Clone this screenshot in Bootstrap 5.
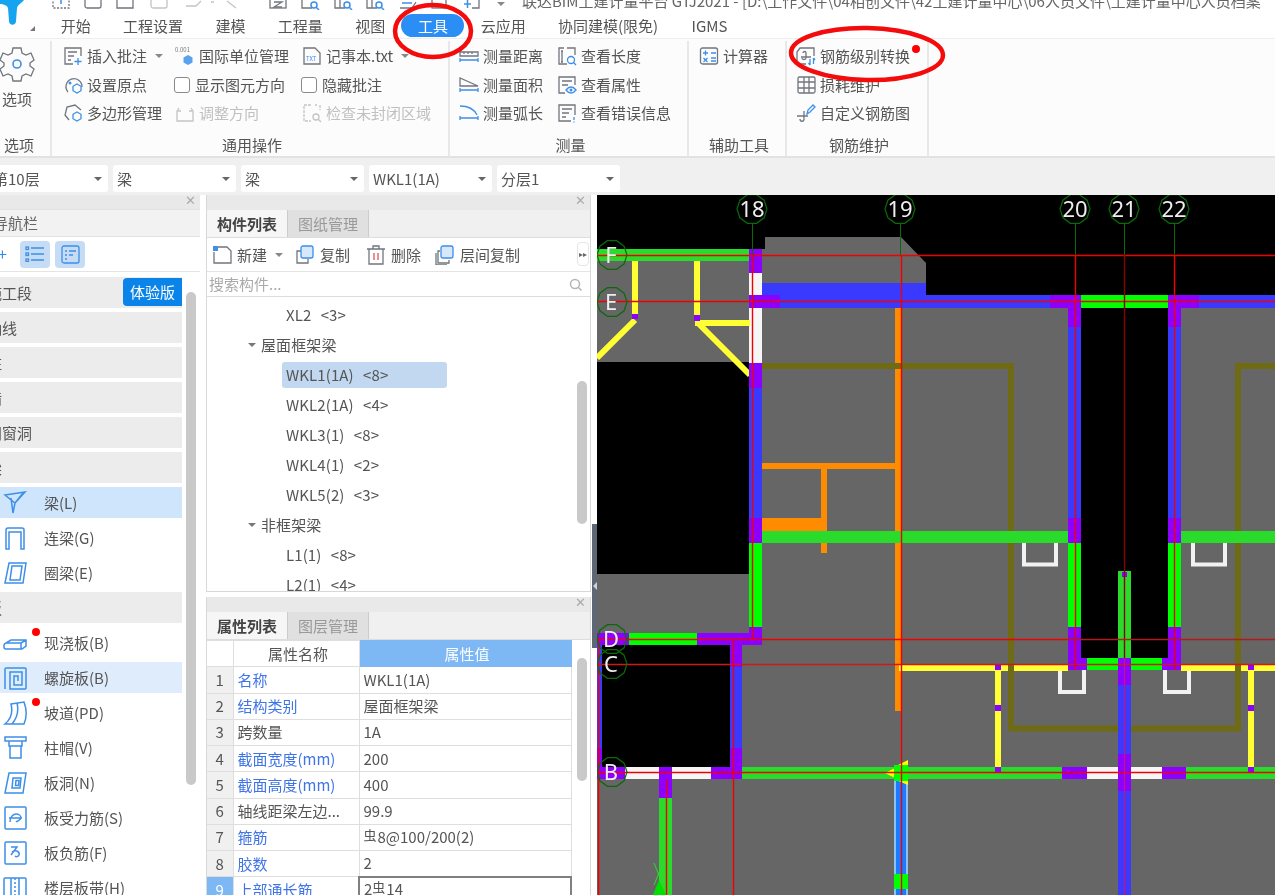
<!doctype html>
<html lang="zh-CN">

<head>
    <meta charset="UTF-8">
    <title>GTJ2021</title>
    <link href="https://cdn.jsdelivr.net/npm/bootstrap@5.3.3/dist/css/bootstrap.min.css" rel="stylesheet">
    <style>
        html, body { width: 1275px; height: 895px; overflow: hidden; background: #fff; }
        body {
            font-family: "Noto Sans CJK SC", "Noto Sans", sans-serif;
            font-size: 15px; line-height: 20px; color: #555;
            position: relative;
            filter: blur(0.35px);
        }
        svg { display: block; flex: none; }
        .ic { fill: none; stroke: #70767e; stroke-width: 1.3; }
        .ic .bl { stroke: #3d8fe8; }
        .ic .fb { fill: #3d8fe8; stroke: none; }
        .ic.off { stroke: #c4c4c4; }
        .ic.off .bl { stroke: #c4c4c4; }
        .ni { fill: none; stroke: #3d8fe8; stroke-width: 1.5; }

        /* top strip */
        .quick-strip { height: 14px; overflow: hidden; position: relative; }
        .logo-mark { position: absolute; left: 0; top: 0; }
        .title-text { position: absolute; left: 522px; top: -9px; white-space: nowrap; color: #666; }
        .qi { position: absolute; top: -10px; }
        .tab-row { height: 24px; padding-left: 44.500px; }
        .tab-item { padding: 0 16.2px; height: 23px; line-height: 23px; border-radius: 12px; color: #555; white-space: nowrap; }
        .tab-on { background: #2b8ef5; color: #fff; padding: 0 16.5px; }
        .tab-last { margin-left: 1px; }
        .logo-corner { position: absolute; left: 30px; top: 26px; width: 0; height: 0; border-left: 5px solid transparent; border-bottom: 5px solid #777; }

        /* ribbon */
        .ribbon { height: 118px; background: #fcfcfc; border-top: 1px solid #eee; }
        .rb-group { height: 115px; border-right: 2px solid #e8e8e8; margin-top: 2px; }
        .rb-body { height: 94px; padding-top: 1px; }
        .rb-label { height: 21px; line-height: 20px; text-align: center; color: #555; padding-left: 4px; }
        .g-opt .rb-label { padding-left: 0; padding-right: 0; text-align: left; margin-left: 4px; }
        .rb-col { flex: none; }
        .rb-item { height: 28.5px; white-space: nowrap; }
        .rb-item svg { margin-right: 4px; }
        .g-opt { width: 52px; }
        .g-gen { width: 398px; }
        .g-mea { width: 239px; }
        .g-aid { width: 98px; }
        .g-reb { width: 142px; }
        .c-a { width: 123px; padding-left: 11px; }
        .c-b { width: 127px; }
        .c-c { width: 148px; }
        .c-d { width: 107px; padding-left: 9px; }
        .c-e { width: 130px; }
        .c-f { padding-left: 10px; }
        .c-g { padding-left: 9px; }
        .opt-big { width: 36px; margin-left: -1px; margin-top: 3px; }
        .opt-big span { margin-top: 7px; }
        .dim-text { color: #c0c0c0; }
        .fake-check { width: 16px; height: 16px; border: 1px solid #8a8a8a; border-radius: 3px; background: #fff; margin-right: 5px; margin-left: -1px; }
        .tri-down { display: inline-block; width: 0; height: 0; border-left: 4px solid transparent; border-right: 4px solid transparent; border-top: 4px solid #888; }
        .red-dot { position: absolute; width: 8px; height: 8px; border-radius: 50%; background: #f00; }
        .dot-rb { left: 912px; top: 45px; }

        /* floor bar */
        .sel-bar { height: 39px; background: #f0f0f0; border-top: 2px solid #e2e2e2; padding-top: 7px; gap: 5px; padding-left: 0; margin-left: -13px; }
        .sel-box { width: 123px; height: 27px; background: #fff; border-radius: 3px; padding: 0 5px 0 4px; }
        .sel-first { width: 121px; padding-left: 0; }
        .sel-first span:first-child { margin-left: 6px; }
        .sel-box .tri-down { border-top-color: #666; margin-right: 1px; }

        /* panels */
        .work-row { height: 700px; }
        .nav-panel { width: 200px; position: relative; overflow: hidden; }
        .panel-head { height: 14px; background: #e9e9e9; position: relative; }
        .mid-col .panel-head { height: 15px; }
        .panel-x { position: absolute; right: 4px; top: -3px; font-size: 13px; line-height: 16px; color: #aaa; }
        .nav-title { height: 28px; background: #f2f2f2; border-top: 1px solid #e2e2e2; border-bottom: 1px solid #e2e2e2; line-height: 26px; padding-left: 0; color: #666; }
        .nav-clip { margin-left: -7px; }
        .nav-tools { height: 35px; border-bottom: 1px solid #e4e4e4; gap: 5px; padding-left: 20px; position: relative; }
        .plus-mark { position: absolute; left: -2px; top: 6px; color: #2b8ef5; font-size: 16px; }
        .nav-btn { width: 30px; height: 27px; background: #c5dcf4; border-radius: 4px; }
        .nav-list { width: 182px; gap: 4px; padding-top: 5px; }
        .nav-row { height: 31px; }
        .sec-row { background: #ececec; }
        .sec-row .lbl { margin-left: -13px; }
        .try-badge { width: 59px; height: 28px; line-height: 28px; background: #0a84e8; color: #fff; text-align: center; border-top-left-radius: 4px; border-bottom-left-radius: 4px; margin-left: auto; align-self: flex-start; margin-top: 1px; }
        .row-on { background: #cfe5fb; }
        .row-hl { background: #deecfc; }
        .nav-ico { width: 44px; padding-left: 3px; }
        .dot-a { left: 32px; top: 433px; }
        .dot-b { left: 32px; top: 503px; }
        .scroll-thumb { position: absolute; width: 10px; background: #c9c9c9; border-radius: 5px; }
        .sb-nav { left: 186px; top: 97px; height: 493px; }

        .mid-col { width: 385px; margin-left: 6px; }
        .mid-top { height: 397px; position: relative; border-left: 1px solid #d8d8d8; border-right: 1px solid #d8d8d8; border-bottom: 1px solid #d8d8d8; overflow: hidden; }
        .mid-btm { height: 298px; margin-top: 5px; position: relative; border-left: 1px solid #d8d8d8; border-right: 1px solid #d8d8d8; overflow: hidden; }
        .tab-bar { height: 28px; background: #f0f0f0; border-bottom: 1px solid #ddd; }
        .pane-tab { width: 81px; line-height: 28px; text-align: center; border-right: 1px solid #ccc; }
        .pane-on { font-weight: 700; color: #444; background: #f6f6f6; }
        .pane-off { background: #e0e0e0; color: #999; }
        .mid-tools { height: 34px; border-bottom: 1px solid #e4e4e4; position: relative; }
        .mt-item { white-space: nowrap; }
        .mt-item svg { margin-right: 5px; }
        .m1 { width: 88px; padding-left: 5px; }
        .m2 { width: 71px; }
        .m3 { width: 69px; }
        .more-btn { position: absolute; left: 370px; top: 4px; width: 12px; height: 24px; border: 1px solid #e6e6e6; border-radius: 4px; background: #fff; font-size: 8px; line-height: 22px; text-align: center; color: #666; }
        .search-row { height: 25px; border-bottom: 1px solid #ddd; padding: 0 8px 0 2px; color: #aaa; }
        .tree-wrap { padding-top: 3px; }
        .tree-row { height: 30px; white-space: nowrap; padding-left: 79px; }
        .tree-row span, .tree-on span { white-space: pre; word-spacing: 1.2px; letter-spacing: 0.1px; }
        .tree-group { padding-left: 41px; }
        .tree-group .tri-down { margin-right: 5px; border-top-color: #777; }
        .tree-on { width: 165px; height: 26px; margin: 2px 0 2px 75px; padding-left: 4px; background: #c1d8f0; border-radius: 3px; }
        .sb-tree { left: 370px; top: 186px; height: 143px; }
        .sb-prop { left: 370px; top: 61px; height: 123px; }

        .prop-table { width: 364px; table-layout: fixed; margin: 0; border-collapse: collapse; font-size: 15px; color: #555; }
        .prop-table td, .prop-table th { height: 26.25px; padding: 0; border: 1px solid #dedede; font-weight: 400; line-height: 20px; vertical-align: middle; white-space: nowrap; overflow: hidden; }
        .prop-table tr > *:first-child { border-left: 0; }
        .prop-table th { text-align: center; color: #555; }
        .cx { width: 26px; background: #f0f0f0; text-align: center; }
        .prop-table th.cx-blank { background: #fff; }
        .cn { width: 126px; padding-left: 4px !important; }
        .cv { width: 212px; padding-left: 4px !important; }
        .prop-table th.cv-head { background: #7db8f5; color: #fff; border-color: #7db8f5; }
        .blue-name { color: #3f74e6; }
        .rebar-sym { font-size: 13px; position: relative; top: -3px; margin-right: 1px; }
        .prop-table td.cx-on { background: #7db8f5; color: #fff; }
        .prop-table td.cell-edit { border: 2px solid #808080; }

        .split-bar { width: 6px; position: relative; }
        .split-dark { position: absolute; left: 1px; top: 329px; width: 5px; height: 124px; background: #5d6776; }
        .split-arrow { position: absolute; left: 2px; top: 387px; width: 0; height: 0; border-top: 4px solid transparent; border-bottom: 4px solid transparent; border-right: 4px solid #cfd3d8; }
        .cad-view { width: 678px; height: 700px; background: #666; }
        .cad-num { font-family: "Noto Sans", sans-serif; font-size: 22px; fill: #eee; text-anchor: middle; }
        .mark-layer { position: absolute; left: 0; top: 0; pointer-events: none; }
    </style>
</head>

<body>
    <div class="quick-strip">
        <svg class="qi" style="left:52px" width="18" height="20" viewBox="0 0 18 20"><rect class="ic" x="1" y="2" width="16" height="16" stroke-dasharray="2 1.5"/><path d="M9 10v4" stroke="#3d8fe8" stroke-width="1.5"/></svg>
        <svg class="qi" style="left:84px" width="18" height="20" viewBox="0 0 18 20"><rect class="ic" x="1" y="2" width="16" height="16" rx="2"/></svg>
        <svg class="qi" style="left:116px" width="18" height="20" viewBox="0 0 18 20"><path class="ic" d="M1 18V8l4-6h12v16z"/></svg>
        <svg class="qi" style="left:150px" width="18" height="20" viewBox="0 0 18 20"><rect class="ic off" x="1" y="2" width="16" height="16" rx="2"/></svg>
        <svg class="qi" style="left:185px" width="32" height="20" viewBox="0 0 32 20"><path class="ic off" d="M1 16h10l5-5M26 12h3"/></svg>
        <svg class="qi" style="left:226px" width="12" height="20" viewBox="0 0 12 20"><path class="ic off" d="M1 11l9 7"/></svg>
        <svg class="qi" style="left:268px" width="20" height="20" viewBox="0 0 20 20"><rect class="ic" x="2" y="2" width="16" height="16"/><path class="ic" d="M6 12h8l-8 5h8"/></svg>
        <svg class="qi" style="left:300px" width="20" height="20" viewBox="0 0 20 20"><path class="ic" d="M2 8v10h10"/><circle cx="14" cy="15" r="3" fill="none" stroke="#3d8fe8" stroke-width="1.5"/><path d="M16 17l3 3" stroke="#3d8fe8" stroke-width="1.5"/></svg>
        <svg class="qi" style="left:333px" width="20" height="20" viewBox="0 0 20 20"><path class="ic" d="M2 8v10h10M7 8v10"/><circle cx="14" cy="15" r="3" fill="none" stroke="#3d8fe8" stroke-width="1.5"/><path d="M16 17l3 3" stroke="#3d8fe8" stroke-width="1.5"/></svg>
        <svg class="qi" style="left:365px" width="20" height="20" viewBox="0 0 20 20"><path class="ic" d="M2 8v10h10M7 8v10"/><circle cx="14" cy="15" r="3" fill="none" stroke="#3d8fe8" stroke-width="1.5"/><path d="M16 17l3 3" stroke="#3d8fe8" stroke-width="1.5"/></svg>
        <svg class="qi" style="left:398px" width="20" height="20" viewBox="0 0 20 20"><path class="ic" d="M2 18h12l4-6"/><path d="M4 13h10" stroke="#3d8fe8" stroke-width="1.5"/></svg>
        <svg class="qi" style="left:430px" width="18" height="20" viewBox="0 0 18 20"><rect class="ic" x="2" y="4" width="14" height="14"/></svg>
        <svg class="qi" style="left:463px" width="18" height="20" viewBox="0 0 18 20"><path d="M1 14h7M4.5 10v8" stroke="#3d8fe8" stroke-width="1.5"/><path class="ic" d="M9 18h7V4"/></svg>
        <span class="tri-down qi" style="left:497px;top:2px"></span>
        <span class="title-text">联达BIM土建计量平台 GTJ2021 - [D:\工作文件\04相创文件\42土建计量中心\06人员文件\土建计量中心人员档案</span>
    </div>
    <div class="d-flex tab-row">
        <div class="tab-item">开始</div>
        <div class="tab-item">工程设置</div>
        <div class="tab-item">建模</div>
        <div class="tab-item">工程量</div>
        <div class="tab-item">视图</div>
        <div class="tab-item tab-on">工具</div>
        <div class="tab-item">云应用</div>
        <div class="tab-item">协同建模(限免)</div>
        <div class="tab-item tab-last">IGMS</div>
    </div>
    <svg class="logo-mark" width="30" height="28" viewBox="0 0 30 28"><path d="M0 0h24c-2 3-6 4-7 8l-1 13c0 5-7 5-7 0L8 8C7 5 3 4 0 4z" fill="#16a3ef"/></svg>
    <span class="logo-corner"></span>

    <div class="d-flex ribbon">
        <div class="rb-group g-opt d-flex flex-column">
            <div class="rb-body d-flex">
                <div class="opt-big d-flex flex-column align-items-center">
                    <svg width="36" height="37" viewBox="0 0 36 37"><path class="ic" d="M14 3h8l1 5 4 2 5-2 3 7-4 3v3l4 3-3 7-5-2-4 2-1 5h-8l-1-5-4-2-5 2-3-7 4-3v-3l-4-3 3-7 5 2 4-2z" stroke-width="1.5"/><circle cx="18" cy="19" r="4" fill="none" stroke="#3d8fe8" stroke-width="1.6"/></svg>
                    <span>选项</span>
                </div>
            </div>
            <div class="rb-label">选项</div>
        </div>
        <div class="rb-group g-gen d-flex flex-column">
            <div class="rb-body d-flex">
                <div class="rb-col c-a">
                    <div class="rb-item d-flex align-items-center">
                        <svg class="ic" width="20" height="20" viewBox="0 0 20 20"><path d="M10 18H2V2h16v8"/><path d="M5 6h9M5 10h6M5 14h3"/><path class="bl" d="M15 12v7M11.500 15.500h7"/></svg>
                        <span>插入批注</span><span class="tri-down ms-2"></span>
                    </div>
                    <div class="rb-item d-flex align-items-center">
                        <svg class="ic" width="20" height="20" viewBox="0 0 20 20"><path d="M5 17a8 8 0 1 1 14-5"/><circle class="fb" cx="7" cy="8" r="1.500"/><path class="bl" d="M14 9l4 2.300v4.400L14 18l-4-2.300v-4.400z"/></svg>
                        <span>设置原点</span>
                    </div>
                    <div class="rb-item d-flex align-items-center">
                        <svg class="ic" width="20" height="20" viewBox="0 0 20 20"><path d="M6 17l-4-5 2-8 8-2 6 5"/><path class="bl" d="M14 9l4 2.300v4.400L14 18l-4-2.300v-4.400z"/></svg>
                        <span>多边形管理</span>
                    </div>
                </div>
                <div class="rb-col c-b">
                    <div class="rb-item d-flex align-items-center">
                        <svg width="20" height="20" viewBox="0 0 20 20"><text x="0" y="6" font-size="6" fill="#777">0.001</text><path d="M13 9l4.500 2.500v5L13 19l-4.500-2.500v-5z" fill="#5aa2ee"/></svg>
                        <span>国际单位管理</span>
                    </div>
                    <div class="rb-item d-flex align-items-center"><span class="fake-check"></span><span>显示图元方向</span></div>
                    <div class="rb-item d-flex align-items-center dim-text">
                        <svg class="ic off" width="20" height="20" viewBox="0 0 20 20"><path d="M2 9v9h16V9M6 8H2l2-3M14 8h4l-2-3"/></svg>
                        <span>调整方向</span>
                    </div>
                </div>
                <div class="rb-col c-c">
                    <div class="rb-item d-flex align-items-center">
                        <svg class="ic" width="20" height="20" viewBox="0 0 20 20"><path d="M2 2h11l5 5v11H2z"/><text x="4" y="15" font-size="6" fill="#3d8fe8" stroke="none">TXT</text></svg>
                        <span>记事本.txt</span><span class="tri-down ms-2"></span>
                    </div>
                    <div class="rb-item d-flex align-items-center"><span class="fake-check"></span><span>隐藏批注</span></div>
                    <div class="rb-item d-flex align-items-center dim-text">
                        <svg class="ic off" width="20" height="20" viewBox="0 0 20 20"><path d="M9 2H2v16h7M13 2h2M18 2v5" stroke-dasharray="3 1"/><circle cx="14" cy="14" r="3"/><path d="M16 16l3 3"/></svg>
                        <span>检查未封闭区域</span>
                    </div>
                </div>
            </div>
            <div class="rb-label">通用操作</div>
        </div>
        <div class="rb-group g-mea d-flex flex-column">
            <div class="rb-body d-flex">
                <div class="rb-col c-d">
                    <div class="rb-item d-flex align-items-center">
                        <svg class="ic" width="20" height="20" viewBox="0 0 20 20"><path d="M1 6h18v4H1zM5 6v2M9 6v2M13 6v2"/><path class="bl" d="M1 14h18M1 12v4M19 12v4"/></svg>
                        <span>测量距离</span>
                    </div>
                    <div class="rb-item d-flex align-items-center">
                        <svg class="ic" width="20" height="20" viewBox="0 0 20 20"><path d="M1 3v8h18z"/><path class="bl" d="M1 15h18M1 13v4M19 13v4"/></svg>
                        <span>测量面积</span>
                    </div>
                    <div class="rb-item d-flex align-items-center">
                        <svg class="ic" width="20" height="20" viewBox="0 0 20 20"><path class="bl" d="M1 15h18M1 13v4M19 13v4"/><path class="bl" d="M1 3c8 0 14 3 17 9"/></svg>
                        <span>测量弧长</span>
                    </div>
                </div>
                <div class="rb-col c-e">
                    <div class="rb-item d-flex align-items-center">
                        <svg class="ic" width="20" height="20" viewBox="0 0 20 20"><path d="M10 2h8v7M10 18H2V2h5M4 5h2M5 5v11M4 16h2"/><circle class="bl" cx="14" cy="14" r="3.500"/><path class="bl" d="M16 16l3 3"/></svg>
                        <span>查看长度</span>
                    </div>
                    <div class="rb-item d-flex align-items-center">
                        <svg class="ic" width="20" height="20" viewBox="0 0 20 20"><path d="M8 18H2V2h16v8M5 6h10M5 10h6"/><path class="bl" d="M9 15c3-4 7-4 10 0-3 4-7 4-10 0z"/><circle class="fb" cx="14" cy="15" r="1.500"/></svg>
                        <span>查看属性</span>
                    </div>
                    <div class="rb-item d-flex align-items-center">
                        <svg class="ic" width="20" height="20" viewBox="0 0 20 20"><path d="M14 18H2V2h16v10M5 6h10M5 10h7M5 14h4"/><path class="bl" d="M17 14v3M17 18.500v1"/></svg>
                        <span>查看错误信息</span>
                    </div>
                </div>
            </div>
            <div class="rb-label">测量</div>
        </div>
        <div class="rb-group g-aid d-flex flex-column">
            <div class="rb-body c-f">
                <div class="rb-item d-flex align-items-center">
                    <svg class="ic" width="20" height="20" viewBox="0 0 20 20"><rect x="1.500" y="2" width="17" height="16" rx="2"/><path class="bl" d="M4 7h5M6.500 4.500v5M12 7h5M12 12h5M12 15h5M4.500 12l4 4M8.500 12l-4 4"/></svg>
                    <span>计算器</span>
                </div>
            </div>
            <div class="rb-label">辅助工具</div>
        </div>
        <div class="rb-group g-reb d-flex flex-column">
            <div class="rb-body c-g">
                <div class="rb-item d-flex align-items-center">
                    <svg class="ic" width="20" height="20" viewBox="0 0 20 20"><path d="M18 10V2H4L1 6v12h9"/><path d="M5 11h10M7 7c0-2 3-2 3 0v5c0 2-4 2-4 0"/><path class="bl" d="M14 13v6M14 19l-1.500-2M17.500 12v6M17.500 12l1.500 2"/></svg>
                    <span>钢筋级别转换</span>
                </div>
                <div class="rb-item d-flex align-items-center">
                    <svg class="ic" width="20" height="20" viewBox="0 0 20 20"><rect x="2" y="2" width="17" height="16" rx="1.500"/><path d="M8 2v16M13 2v16M2 7h17M2 13h17"/></svg>
                    <span>损耗维护</span>
                </div>
                <div class="rb-item d-flex align-items-center">
                    <svg class="ic" width="20" height="20" viewBox="0 0 20 20"><path d="M1 13h11M8 8v8c0 3-4 3-4 0"/><path class="bl" d="M11 11l1-4 5-5 2 2-5 5z"/></svg>
                    <span>自定义钢筋图</span>
                </div>
            </div>
            <div class="rb-label">钢筋维护</div>
        </div>
    </div>
    <span class="red-dot dot-rb"></span>

    <div class="d-flex sel-bar">
        <div class="sel-box sel-first d-flex align-items-center justify-content-between"><span>第10层</span><span class="tri-down"></span></div>
        <div class="sel-box d-flex align-items-center justify-content-between"><span>梁</span><span class="tri-down"></span></div>
        <div class="sel-box d-flex align-items-center justify-content-between"><span>梁</span><span class="tri-down"></span></div>
        <div class="sel-box d-flex align-items-center justify-content-between"><span>WKL1(1A)</span><span class="tri-down"></span></div>
        <div class="sel-box d-flex align-items-center justify-content-between"><span>分层1</span><span class="tri-down"></span></div>
    </div>

    <div class="d-flex work-row">
        <div class="nav-panel">
            <div class="panel-head"><span class="panel-x">✕</span></div>
            <div class="nav-title"><span class="nav-clip">导航栏</span></div>
            <div class="nav-tools d-flex align-items-center">
                <span class="plus-mark">+</span>
                <div class="nav-btn d-flex align-items-center justify-content-center">
                    <svg width="20" height="16" viewBox="0 0 20 16" fill="none" stroke="#3d8fe8" stroke-width="1.3"><rect x="1" y="1" width="2.500" height="2.500"/><rect x="1" y="7" width="2.500" height="2.500"/><rect x="1" y="13" width="2.500" height="2.500"/><path d="M6 2h13M6 8h13M6 14h13"/></svg>
                </div>
                <div class="nav-btn d-flex align-items-center justify-content-center">
                    <svg width="19" height="19" viewBox="0 0 19 19" fill="none" stroke="#3d8fe8" stroke-width="1.3"><rect x="1" y="1" width="17" height="17" rx="2"/><path d="M4 6h2M8 6h7M4 10h2M8 10h4M4 14h2"/></svg>
                </div>
            </div>
            <div class="nav-list d-flex flex-column">
                <div class="nav-row sec-row d-flex align-items-center"><span class="lbl">施工段</span><span class="try-badge">体验版</span></div>
                <div class="nav-row sec-row d-flex align-items-center"><span class="lbl">轴线</span></div>
                <div class="nav-row sec-row d-flex align-items-center"><span class="lbl">柱</span></div>
                <div class="nav-row sec-row d-flex align-items-center"><span class="lbl">墙</span></div>
                <div class="nav-row sec-row d-flex align-items-center"><span class="lbl">门窗洞</span></div>
                <div class="nav-row sec-row d-flex align-items-center"><span class="lbl">梁</span></div>
                <div class="nav-row row-on d-flex align-items-center">
                    <div class="nav-ico"><svg class="ni" width="24" height="24" viewBox="0 0 24 24"><path d="M2 4l20-3-10 11zM8 7l2 15 2-10M12 12l8-10"/></svg></div><span>梁(L)</span>
                </div>
                <div class="nav-row d-flex align-items-center">
                    <div class="nav-ico"><svg class="ni" width="24" height="24" viewBox="0 0 24 24"><path d="M3 23V4q0-2 2-2h14q2 0 2 2v19h-3V6H6v17z"/></svg></div><span>连梁(G)</span>
                </div>
                <div class="nav-row d-flex align-items-center">
                    <div class="nav-ico"><svg class="ni" width="24" height="24" viewBox="0 0 24 24"><path d="M6 2h17l-3 20H2zM9 5h10l-2 14H7z"/></svg></div><span>圈梁(E)</span>
                </div>
                <div class="nav-row sec-row d-flex align-items-center"><span class="lbl">板</span></div>
                <div class="nav-row d-flex align-items-center">
                    <div class="nav-ico"><svg class="ni" width="24" height="24" viewBox="0 0 24 24"><path d="M8 9h15v6l-4 3H3q-2 0-2-2v-2q0-1 2-2zM3 12h15l5-3M18 12v6"/></svg></div><span>现浇板(B)</span>
                </div>
                <div class="nav-row row-hl d-flex align-items-center">
                    <div class="nav-ico"><svg class="ni" width="24" height="24" viewBox="0 0 24 24"><path d="M2 23V3q0-1 1-1h19q1 0 1 1v19q0 1-1 1H7V6h12v13h-8v-9h4v5"/></svg></div><span>螺旋板(B)</span>
                </div>
                <div class="nav-row d-flex align-items-center">
                    <div class="nav-ico"><svg class="ni" width="24" height="24" viewBox="0 0 24 24"><path d="M8 3l13-2c3 8 3 15 0 22H2c6-5 8-12 6-20zM14 2c2 8 0 15-5 21" /></svg></div><span>坡道(PD)</span>
                </div>
                <div class="nav-row d-flex align-items-center">
                    <div class="nav-ico"><svg class="ni" width="24" height="24" viewBox="0 0 24 24"><path d="M2 1h21v4H2zM2 5h4v5h13V5h4M7 10v12h11V10"/></svg></div><span>柱帽(V)</span>
                </div>
                <div class="nav-row d-flex align-items-center">
                    <div class="nav-ico"><svg class="ni" width="24" height="24" viewBox="0 0 24 24"><path d="M6 2h17l-3 20H2zM10 7h8l-1 10H9zM13 9.500h3l-.5 5h-3z"/></svg></div><span>板洞(N)</span>
                </div>
                <div class="nav-row d-flex align-items-center">
                    <div class="nav-ico"><svg class="ni" width="24" height="24" viewBox="0 0 24 24"><rect x="2" y="1" width="21" height="22" rx="1"/><path d="M6 12h13M7 16c0-6 4-8 6-8 3 0 5 2 5 4-1 3-4 3-5 4"/></svg></div><span>板受力筋(S)</span>
                </div>
                <div class="nav-row d-flex align-items-center">
                    <div class="nav-ico"><svg class="ni" width="24" height="24" viewBox="0 0 24 24"><rect x="2" y="1" width="21" height="22" rx="1"/><path d="M8 6h6L8 14M9 11c4-3 8 0 7 3-1 2-3 2-4 1"/></svg></div><span>板负筋(F)</span>
                </div>
                <div class="nav-row d-flex align-items-center">
                    <div class="nav-ico"><svg class="ni" width="24" height="24" viewBox="0 0 24 24"><rect x="1" y="2" width="22" height="20" rx="1"/><path d="M8 2v20M16 2v20" /><path d="M12 2v20" stroke-dasharray="2 2"/></svg></div><span>楼层板带(H)</span>
                </div>
            </div>
            <span class="red-dot dot-a"></span>
            <span class="red-dot dot-b"></span>
            <span class="scroll-thumb sb-nav"></span>
        </div>

        <div class="mid-col">
            <div class="mid-top">
                <div class="panel-head"><span class="panel-x">✕</span></div>
                <div class="tab-bar d-flex">
                    <div class="pane-tab pane-on">构件列表</div>
                    <div class="pane-tab pane-off">图纸管理</div>
                </div>
                <div class="mid-tools d-flex align-items-center">
                    <div class="mt-item m1 d-flex align-items-center">
                        <svg class="ic" width="20" height="20" viewBox="0 0 20 20"><path d="M6 2h9l4 4v12H2V7"/><rect class="fb" x="1" y="1" width="5" height="5"/></svg>
                        <span>新建</span><span class="tri-down ms-2"></span>
                    </div>
                    <div class="mt-item m2 d-flex align-items-center">
                        <svg class="ic" width="20" height="20" viewBox="0 0 20 20"><path d="M6 6H2v12h11v-4"/><rect class="bl" x="6" y="1" width="12" height="12" rx="2" fill="#d7e8fb"/></svg>
                        <span>复制</span>
                    </div>
                    <div class="mt-item m3 d-flex align-items-center">
                        <svg class="ic" width="20" height="20" viewBox="0 0 20 20"><path d="M1 4h18M7 4V1h6v3M3 4v15h14V4"/><path d="M8 8v7M12 8v7" stroke="#e05555"/></svg>
                        <span>删除</span>
                    </div>
                    <div class="mt-item d-flex align-items-center">
                        <svg class="ic" width="20" height="20" viewBox="0 0 20 20"><path d="M5 6H3v12h11v-3M1 8v12h11"/><rect class="bl" x="6" y="1" width="12" height="12" rx="2" fill="#d7e8fb"/></svg>
                        <span>层间复制</span>
                    </div>
                    <div class="more-btn">▸▸</div>
                </div>
                <div class="search-row d-flex align-items-center justify-content-between">
                    <span>搜索构件...</span>
                    <svg width="13" height="13" viewBox="0 0 13 13" fill="none" stroke="#b5b5b5" stroke-width="1.500"><circle cx="6" cy="6" r="4.500"/><path d="M9.500 9.500l3 3"/></svg>
                </div>
                <div class="tree-wrap">
                    <div class="tree-row d-flex align-items-center"><span>XL2  &lt;3&gt;</span></div>
                    <div class="tree-row tree-group d-flex align-items-center"><span class="tri-down"></span><span>屋面框架梁</span></div>
                    <div class="tree-on d-flex align-items-center"><span>WKL1(1A)  &lt;8&gt;</span></div>
                    <div class="tree-row d-flex align-items-center"><span>WKL2(1A)  &lt;4&gt;</span></div>
                    <div class="tree-row d-flex align-items-center"><span>WKL3(1)  &lt;8&gt;</span></div>
                    <div class="tree-row d-flex align-items-center"><span>WKL4(1)  &lt;2&gt;</span></div>
                    <div class="tree-row d-flex align-items-center"><span>WKL5(2)  &lt;3&gt;</span></div>
                    <div class="tree-row tree-group d-flex align-items-center"><span class="tri-down"></span><span>非框架梁</span></div>
                    <div class="tree-row d-flex align-items-center"><span>L1(1)  &lt;8&gt;</span></div>
                    <div class="tree-row d-flex align-items-center"><span>L2(1)  &lt;4&gt;</span></div>
                </div>
                <span class="scroll-thumb sb-tree"></span>
            </div>
            <div class="mid-btm">
                <div class="panel-head"><span class="panel-x">✕</span></div>
                <div class="tab-bar d-flex">
                    <div class="pane-tab pane-on">属性列表</div>
                    <div class="pane-tab pane-off">图层管理</div>
                </div>
                <table class="prop-table">
                    <tr><th class="cx cx-blank"></th><th class="cn">属性名称</th><th class="cv cv-head">属性值</th></tr>
                    <tr><td class="cx">1</td><td class="cn blue-name">名称</td><td class="cv">WKL1(1A)</td></tr>
                    <tr><td class="cx">2</td><td class="cn blue-name">结构类别</td><td class="cv">屋面框架梁</td></tr>
                    <tr><td class="cx">3</td><td class="cn">跨数量</td><td class="cv">1A</td></tr>
                    <tr><td class="cx">4</td><td class="cn blue-name">截面宽度(mm)</td><td class="cv">200</td></tr>
                    <tr><td class="cx">5</td><td class="cn blue-name">截面高度(mm)</td><td class="cv">400</td></tr>
                    <tr><td class="cx">6</td><td class="cn">轴线距梁左边...</td><td class="cv">99.9</td></tr>
                    <tr><td class="cx">7</td><td class="cn blue-name">箍筋</td><td class="cv"><span class="rebar-sym">虫</span>8@100/200(2)</td></tr>
                    <tr><td class="cx">8</td><td class="cn blue-name">胶数</td><td class="cv">2</td></tr>
                    <tr><td class="cx cx-on">9</td><td class="cn blue-name">上部通长筋</td><td class="cv cell-edit">2<span class="rebar-sym">虫</span>14</td></tr>
                </table>
                <span class="scroll-thumb sb-prop"></span>
            </div>
        </div>

        <div class="split-bar"><span class="split-dark"></span><span class="split-arrow"></span></div>

        <svg class="cad-view" viewBox="597 195 678 700">
            <defs>
                <polygon id="axis-ring" points="15,0 12.1,8.800 4.600,14.300 -4.600,14.300 -12.100,8.800 -15,0 -12.100,-8.800 -4.600,-14.300 4.600,-14.300 12.100,-8.800" fill="none" stroke="#0a6a0a" stroke-width="1.200"/>
            </defs>
            <!-- black voids -->
            <g fill="#000">
                <path d="M597 195H1275V295H926V263L901 237H765V249H597z"/>
                <rect x="597" y="362" width="153" height="212"/>
                <rect x="1081" y="295" width="87" height="363"/>
                <rect x="602" y="645" width="128" height="122"/>
            </g>
            <!-- white walls -->
            <g fill="#f6f6f6">
                <rect x="749" y="273" width="13" height="90"/>
                <rect x="625" y="767" width="34" height="12"/>
                <rect x="672" y="767" width="39" height="12"/>
                <rect x="1087" y="767" width="31" height="12"/>
                <rect x="1131" y="767" width="31" height="12"/>
            </g>
            <g fill="none" stroke="#f2f2f2" stroke-width="4">
                <path d="M1024 543v21.500h32V543M1193 543v21.500h32V543"/>
                <path d="M1070 668h-10v24h24v-24M1179 668h10v24h-24v-24"/>
            </g>
            <!-- olive outline -->
            <path d="M762 366H1011V728.500H1238V366H1275" fill="none" stroke="#6f6a14" stroke-width="6"/>
            <!-- orange -->
            <g fill="#ff8c00">
                <rect x="895" y="308" width="6" height="403"/>
                <rect x="762" y="463" width="133" height="6"/>
                <rect x="821" y="469" width="6" height="84"/>
                <rect x="762" y="518" width="65" height="13"/>
            </g>
            <rect x="895" y="363" width="6" height="6" fill="#6f6a14"/>
            <!-- yellow -->
            <g fill="#ffff33">
                <rect x="632" y="261" width="6" height="53"/>
                <rect x="694" y="261" width="6" height="54"/>
                <rect x="695" y="320" width="55" height="6"/>
                <rect x="899" y="665" width="169" height="6"/>
                <rect x="1181" y="665" width="94" height="6"/>
                <rect x="995" y="664" width="6" height="106"/>
                <rect x="1248" y="664" width="6" height="106"/>
            </g>
            <path d="M697 322L750 375M635 320L597 358" stroke="#ffff33" stroke-width="6"/>
            <rect x="1008" y="664" width="6" height="7" fill="#6f6a14"/>
            <rect x="1235" y="664" width="6" height="7" fill="#6f6a14"/>
            <!-- blue beams -->
            <g fill="#3a3aff">
                <rect x="762" y="283" width="164" height="25"/>
                <rect x="926" y="295" width="124" height="13"/>
                <rect x="1199" y="295" width="76" height="13"/>
                <rect x="749" y="388" width="13" height="130"/>
                <rect x="1068" y="327" width="13" height="191"/>
                <rect x="1168" y="327" width="13" height="191"/>
                <rect x="730" y="667" width="12" height="81"/>
                <rect x="597" y="645" width="5" height="103"/>
                <rect x="1118" y="685" width="13" height="69"/>
                <rect x="1118" y="791" width="13" height="104"/>
            </g>
            <!-- green beams, dim -->
            <g fill="#2bdb2b">
                <rect x="597" y="249" width="152" height="12"/>
                <rect x="762" y="531" width="306" height="12"/>
                <rect x="1181" y="531" width="94" height="12"/>
                <rect x="742" y="767" width="320" height="12"/>
                <rect x="1186" y="767" width="89" height="12"/>
                <rect x="659" y="798" width="13" height="97"/>
                <rect x="1118" y="571" width="13" height="87"/>
            </g>
            <!-- green beams, bright -->
            <g fill="#00ff00">
                <rect x="1081" y="295" width="87" height="13"/>
                <rect x="749" y="543" width="13" height="84"/>
                <rect x="629" y="633" width="68" height="12"/>
                <rect x="1068" y="543" width="13" height="84"/>
                <rect x="1168" y="543" width="13" height="84"/>
                <rect x="1087" y="658" width="31" height="12"/>
                <rect x="1131" y="658" width="31" height="12"/>
            </g>
            <!-- purple joints -->
            <g fill="#8c00ff">
                <rect x="749" y="249" width="13" height="24"/>
                <rect x="749" y="295" width="31" height="13"/>
                <rect x="749" y="363" width="13" height="25"/>
                <rect x="749" y="518" width="13" height="25"/>
                <rect x="749" y="627" width="13" height="18"/>
                <rect x="697" y="633" width="52" height="12"/>
                <rect x="597" y="633" width="32" height="12"/>
                <rect x="730" y="645" width="12" height="22"/>
                <rect x="730" y="748" width="12" height="31"/>
                <rect x="711" y="767" width="19" height="12"/>
                <rect x="597" y="748" width="5" height="31"/>
                <rect x="602" y="767" width="23" height="12"/>
                <rect x="659" y="767" width="13" height="31"/>
                <rect x="1050" y="295" width="31" height="13"/>
                <rect x="1068" y="308" width="13" height="19"/>
                <rect x="1168" y="295" width="31" height="13"/>
                <rect x="1168" y="308" width="13" height="19"/>
                <rect x="1068" y="518" width="13" height="25"/>
                <rect x="1168" y="518" width="13" height="25"/>
                <rect x="1068" y="627" width="13" height="43"/>
                <rect x="1081" y="658" width="6" height="12"/>
                <rect x="1168" y="627" width="13" height="43"/>
                <rect x="1162" y="658" width="6" height="12"/>
                <rect x="1118" y="658" width="13" height="27"/>
                <rect x="1118" y="754" width="13" height="37"/>
                <rect x="1062" y="767" width="25" height="12"/>
                <rect x="1162" y="767" width="24" height="12"/>
                <rect x="632" y="314" width="6" height="5"/>
                <rect x="694" y="315" width="6" height="6"/>
                <rect x="1122" y="572" width="5" height="5"/>
                <rect x="995" y="664" width="6" height="6"/>
                <rect x="995" y="705" width="6" height="6"/>
                <rect x="995" y="767" width="6" height="6"/>
                <rect x="1248" y="664" width="6" height="6"/>
                <rect x="1248" y="705" width="6" height="6"/>
                <rect x="1248" y="767" width="6" height="6"/>
            </g>
            <!-- coupling beam at the column mark -->
            <rect x="894" y="780" width="14" height="115" fill="#8ec0f5"/>
            <rect x="896" y="780" width="10" height="115" fill="#1c7bff"/>
            <rect x="894" y="874" width="14" height="15" fill="#00ff00"/>
            <path d="M908 760V766H896zM908 785V780H896zM885 773L895 768V778z" fill="#ffff00"/>
            <rect x="894" y="765" width="14" height="16" fill="#00ff00"/>
            <!-- grid lines -->
            <g stroke="#0a6a0a" stroke-width="1">
                <path d="M752.500 223V255M900.500 223V255M1075.500 223V255M1124.500 223V255M1174.500 223V255" fill="none"/>
            </g>
            <g stroke="#f00000" stroke-width="1.400" fill="none">
                <path d="M597 255.500H1275M597 301.500H1275"/>
                <path d="M597 639.500H1068"/>
                <path d="M597 664.500H1275" stroke="#d01818"/>
                <path d="M597 772.500H1275"/>
                <path d="M752.500 255V640M733.500 640V895M901.500 255V895M1075.500 255V670M1174.500 255V670M598.500 640V895M666.500 779V895"/>
                <path d="M1124.500 255V658" stroke="#8c0000"/>
                <path d="M1124.500 658V895" stroke="#c0148c"/>
                <path d="M1068 639.500H1275" stroke="#b01c1c"/>
            </g>
            <!-- axis marks -->
            <use href="#axis-ring" x="752" y="209"/>
            <use href="#axis-ring" x="900" y="209"/>
            <use href="#axis-ring" x="1075" y="209"/>
            <use href="#axis-ring" x="1124" y="209"/>
            <use href="#axis-ring" x="1174" y="209"/>
            <use href="#axis-ring" x="612" y="255"/>
            <use href="#axis-ring" x="612" y="302"/>
            <use href="#axis-ring" x="612" y="639"/>
            <use href="#axis-ring" x="612" y="664"/>
            <use href="#axis-ring" x="612" y="772"/>
            <text class="cad-num" x="752" y="217">18</text>
            <text class="cad-num" x="900" y="217">19</text>
            <text class="cad-num" x="1075" y="217">20</text>
            <text class="cad-num" x="1124" y="217">21</text>
            <text class="cad-num" x="1174" y="217">22</text>
            <text class="cad-num" x="611" y="263">F</text>
            <text class="cad-num" x="611" y="310">E</text>
            <text class="cad-num" x="611" y="647">D</text>
            <text class="cad-num" x="611" y="672">C</text>
            <text class="cad-num" x="611" y="780">B</text>
            <!-- origin arrow -->
            <path d="M654 863L663 885M663 863L654 885" stroke="#2bdb2b" stroke-width="1"/>
            <path d="M659 880L666 895H653z" fill="#00e000"/>
        </svg>
    </div>

    <svg class="mark-layer" width="1275" height="895" viewBox="0 0 1275 895" fill="none" stroke="#f40b0b" stroke-width="4.500">
        <ellipse cx="433" cy="31" rx="38" ry="26"/>
        <ellipse cx="867" cy="54" rx="76" ry="26" transform="rotate(1 867 54)"/>
    </svg>

    <script src="https://cdn.jsdelivr.net/npm/bootstrap@5.3.3/dist/js/bootstrap.bundle.min.js"></script>
</body>

</html>
